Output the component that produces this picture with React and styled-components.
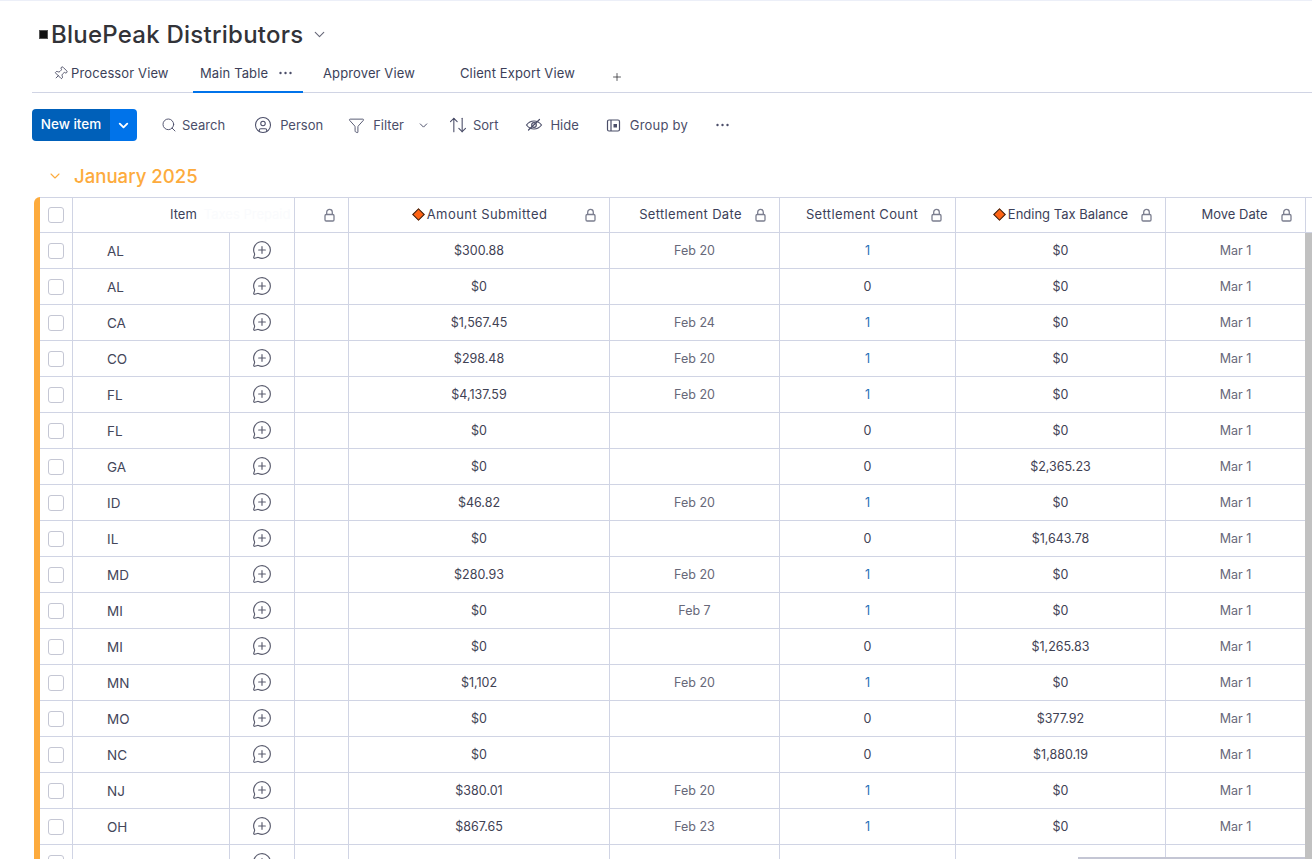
import React from "react";
import styled, { createGlobalStyle } from "styled-components";
import {
  ArrowUpDown,
  ChevronDown,
  CircleUser,
  Funnel,
  MessageCirclePlus,
  Pin,
  Plus,
  Search,
} from "lucide-react";

const LINE = "#d0d4e4";
const ORANGE = "#fdab3d";

const GlobalStyle = createGlobalStyle`
  html, body {
    margin: 0;
    height: 100%;
    overflow: hidden;
    background: #fff;
    font-family: Inter, "Liberation Sans", sans-serif;
    color: #323338;
  }
`;

const Page = styled.div`
  position: relative;
  height: 859px;
  overflow: hidden;
  border-top: 1px solid #eceff8;
  box-sizing: border-box;
`;

const TitleRow = styled.div`
  display: flex;
  align-items: center;
  height: 30px;
  margin: 18px 0 0 39px;
`;

const TitleMark = styled.span`
  width: 7px;
  height: 7px;
  margin-right: 3px;
  background: #111;
  border: 1px solid #555;
`;

const Title = styled.h1`
  margin: 0 8px 0 0;
  font-size: 24px;
  font-weight: 500;
  letter-spacing: 0.24px;
  color: #323338;
`;

const Tabs = styled.nav`
  display: flex;
  align-items: stretch;
  height: 43px;
  margin: 0 0 0 32px;
  border-bottom: 1px solid ${LINE};
`;

const Tab = styled.div`
  display: flex;
  align-items: center;
  gap: 3px;
  box-sizing: border-box;
  width: ${(p) => p.$width}px;
  height: 44px;
  padding: 6px 0 0 ${(p) => p.$pad}px;
  font-size: 13px;
  letter-spacing: 0.12px;
  color: #3c3f59;
  border-bottom: 2px solid ${(p) => (p.$active ? "#0073ea" : "transparent")};
`;

const TabDots = styled.span`
  display: flex;
  margin-left: 8px;
`;

const AddTab = styled.div`
  display: flex;
  align-items: center;
  padding: 12px 0 0 14px;
`;

const PinIcon = styled(Pin)`
  transform: rotate(45deg);
`;

const Toolbar = styled.div`
  display: flex;
  align-items: center;
  height: 32px;
  margin: 16px 0 0 32px;
`;

const NewItem = styled.div`
  display: flex;
  width: 105px;
  height: 32px;
  border-radius: 4px;
  overflow: hidden;
  color: #fff;
  font-size: 13.5px;
  font-weight: 500;
  margin-right: 24px;
`;

const NewItemLabel = styled.div`
  display: flex;
  align-items: center;
  justify-content: center;
  width: 78px;
  padding-bottom: 2px;
  box-sizing: border-box;
  background: #0060b9;
`;

const NewItemArrow = styled.div`
  display: flex;
  align-items: center;
  justify-content: center;
  flex: 1;
  background: #0073ea;
`;

const Tool = styled.div`
  display: flex;
  align-items: center;
  gap: ${(p) => p.$gap || 8}px;
  margin-right: ${(p) => p.$after}px;
  font-size: 13px;
  letter-spacing: ${(p) => p.$track || 0}px;
  color: #4b4e69;
  svg {
    flex: none;
  }
`;

const GroupHeader = styled.div`
  display: flex;
  align-items: center;
  gap: 11px;
  height: 28px;
  margin: 21px 0 7px 47px;
  color: ${ORANGE};
  font-size: 18.6px;
  font-weight: 500;
`;

const Table = styled.div`
  margin-left: 34px;
  border-left: 6px solid ${ORANGE};
  border-top-left-radius: 6px;
`;

const Row = styled.div`
  display: grid;
  grid-template-columns: 33px 157px 65px 54px 261px 170px 176px 210px 140px;
  height: 36px;
  box-sizing: border-box;
  border-bottom: 1px solid ${LINE};
`;

const HeadRow = styled.div`
  display: grid;
  grid-template-columns: 33px 222px 54px 261px 170px 176px 210px 140px;
  height: 36px;
  box-sizing: border-box;
  border-top: 1px solid ${LINE};
  border-bottom: 1px solid ${LINE};
  width: 1272px;
`;

const Cell = styled.div`
  display: flex;
  align-items: center;
  justify-content: center;
  box-sizing: border-box;
  min-width: 0;
  border-right: 1px solid ${LINE};
  font-size: 12.5px;
  color: ${(p) => p.$color || "#3f4254"};
`;

const ItemCell = styled(Cell)`
  justify-content: flex-start;
  padding-left: 34px;
  font-size: 13.5px;
  color: #44465a;
`;

const HeadCell = styled(Cell)`
  position: relative;
  font-size: 13px;
  color: #3c3f59;
  padding: 0 ${(p) => p.$shift || 0}px 2px ${(p) => p.$nudge || 0}px;
  letter-spacing: ${(p) => p.$track || 0}px;
  white-space: nowrap;
`;

const HeadItem = styled(HeadCell)`
  justify-content: flex-start;
  padding-left: 97px;
  gap: 7px;
`;

const GhostLabel = styled.span`
  color: #fafbfd;
  font-size: 13px;
`;

const LockWrap = styled.span`
  position: absolute;
  right: 13px;
  top: 10px;
  display: flex;
`;

const Diamond = styled.span`
  width: 7px;
  height: 7px;
  margin-right: 4px;
  background: #ff6414;
  border: 1px solid #33241c;
  transform: rotate(45deg);
`;

const Box = styled.span`
  width: 14px;
  height: 14px;
  border: 1px solid #c5c7d4;
  border-radius: 3px;
`;

const CommentIcon = styled(MessageCirclePlus)`
  margin: 0 0 2px 0;
  color: #5a5c6e;
`;

const ScrollY = styled.div`
  position: absolute;
  top: 232px;
  right: 0;
  bottom: 0;
  width: 7px;
  background: #c1c1c1;
`;

const ScrollX = styled.div`
  position: absolute;
  left: 1078px;
  right: 7px;
  bottom: 0;
  height: 2px;
  background: #c4c6d4;
`;

const TopEdge = styled.div`
  position: absolute;
  top: 196px;
  left: 1305px;
  right: 0;
  height: 1px;
  background: ${LINE};
`;

const HideIcon = () => (
  <svg width="18" height="18" viewBox="0 0 18 18" fill="none" stroke="#4b4e69" strokeWidth="1.2" strokeLinecap="round">
    <path d="M1.5 9C3.5 6.300 6 5 9 5s5.500 1.300 7.500 4c-2 2.700-4.500 4-7.500 4s-5.500-1.300-7.500-4Z" />
    <circle cx="9" cy="9" r="2.300" />
    <path d="M14.500 3.500 3.500 14" />
  </svg>
);

const GroupIcon = () => (
  <svg width="15" height="15" viewBox="0 0 15 15" fill="none" stroke="#4b4e69" strokeWidth="1.200">
    <rect x="1.500" y="2" width="12" height="11" rx="1.500" />
    <path d="M5 2v11" />
    <rect x="7.500" y="6" width="3.500" height="3.500" fill="#4b4e69" stroke="none" />
  </svg>
);

const DotsIcon = ({ width = 13 }) => (
  <svg width={width} height="4" viewBox="0 0 13 4" fill="#4b4e69">
    <circle cx="1.500" cy="2" r="1.200" />
    <circle cx="6.500" cy="2" r="1.200" />
    <circle cx="11.500" cy="2" r="1.200" />
  </svg>
);

const LockIcon = () => (
  <LockWrap>
    <svg width="11" height="14" viewBox="0 0 11 14" fill="none" stroke="#7b7e8f" strokeWidth="1.300">
      <path d="M2.700 6.500V4.200a2.800 2.800 0 0 1 5.600 0v2.300" />
      <rect x="1" y="6.500" width="9" height="6.500" rx="1.200" />
    </svg>
  </LockWrap>
);

const rows = [
  ["AL", "$300.88", "Feb 20", 1, "$0"],
  ["AL", "$0", "", 0, "$0"],
  ["CA", "$1,567.45", "Feb 24", 1, "$0"],
  ["CO", "$298.48", "Feb 20", 1, "$0"],
  ["FL", "$4,137.59", "Feb 20", 1, "$0"],
  ["FL", "$0", "", 0, "$0"],
  ["GA", "$0", "", 0, "$2,365.23"],
  ["ID", "$46.82", "Feb 20", 1, "$0"],
  ["IL", "$0", "", 0, "$1,643.78"],
  ["MD", "$280.93", "Feb 20", 1, "$0"],
  ["MI", "$0", "Feb 7", 1, "$0"],
  ["MI", "$0", "", 0, "$1,265.83"],
  ["MN", "$1,102", "Feb 20", 1, "$0"],
  ["MO", "$0", "", 0, "$377.92"],
  ["NC", "$0", "", 0, "$1,880.19"],
  ["NJ", "$380.01", "Feb 20", 1, "$0"],
  ["OH", "$867.65", "Feb 23", 1, "$0"],
];

export default function App() {
  return (
    <Page>
      <GlobalStyle />
      <TitleRow>
        <TitleMark />
        <Title>BluePeak Distributors</Title>
        <ChevronDown size={17} color="#676879" strokeWidth={1.6} />
      </TitleRow>
      <Tabs>
        <Tab $width={161} $pad={21}>
          <PinIcon size={15} strokeWidth={1.3} />
          Processor View
        </Tab>
        <Tab $width={110} $pad={7} $active>
          Main Table
          <TabDots><DotsIcon /></TabDots>
        </Tab>
        <Tab $width={137} $pad={20}>Approver View</Tab>
        <Tab $width={157} $pad={20}>Client Export View</Tab>
        <AddTab>
          <Plus size={12} strokeWidth={1.6} />
        </AddTab>
      </Tabs>
      <Toolbar>
        <NewItem>
          <NewItemLabel>New item</NewItemLabel>
          <NewItemArrow>
            <ChevronDown size={15} strokeWidth={3} />
          </NewItemArrow>
        </NewItem>
        <Tool $after={29} $gap={5}>
          <Search size={16} strokeWidth={1.4} />
          Search
        </Tool>
        <Tool $after={25}>
          <CircleUser size={18} strokeWidth={1.4} />
          Person
        </Tool>
        <Tool $after={13}>
          <Funnel size={17} strokeWidth={1.3} />
          Filter
        </Tool>
        <Tool $after={18}>
          <ChevronDown size={13} strokeWidth={1.8} />
        </Tool>
        <Tool $after={27} $gap={5}>
          <ArrowUpDown size={20} strokeWidth={1.3} />
          Sort
        </Tool>
        <Tool $after={27} $gap={7}>
          <HideIcon />
          Hide
        </Tool>
        <Tool $after={27} $gap={9} $track={0.2}>
          <GroupIcon />
          Group by
        </Tool>
        <Tool $after={0}>
          <DotsIcon width={15} />
        </Tool>
      </Toolbar>
      <GroupHeader>
        <ChevronDown size={16} strokeWidth={1.6} />
        January 2025
      </GroupHeader>
      <Table>
        <HeadRow>
          <Cell><Box /></Cell>
          <HeadItem>
            Item
            <GhostLabel>Taxes Prepaid</GhostLabel>
          </HeadItem>
          <HeadCell><LockIcon /></HeadCell>
          <HeadCell $track={0.44} $nudge={3}>
            <Diamond />
            Amount Submitted
            <LockIcon />
          </HeadCell>
          <HeadCell $shift={8} $track={0.33}>
            Settlement Date
            <LockIcon />
          </HeadCell>
          <HeadCell $shift={11} $track={0.37}>
            Settlement Count
            <LockIcon />
          </HeadCell>
          <HeadCell $nudge={2}>
            <Diamond />
            Ending Tax Balance
            <LockIcon />
          </HeadCell>
          <HeadCell $shift={2}>
            Move Date
            <LockIcon />
          </HeadCell>
        </HeadRow>
        {rows.map(([item, amount, settled, count, balance], i) => (
          <Row key={i}>
            <Cell><Box /></Cell>
            <ItemCell>{item}</ItemCell>
            <Cell><CommentIcon size={20} strokeWidth={1.4} /></Cell>
            <Cell />
            <Cell>{amount}</Cell>
            <Cell $color="#676879">{settled}</Cell>
            <Cell $color={count ? "#1f6fb8" : "#3f4254"}>{count}</Cell>
            <Cell>{balance}</Cell>
            <Cell $color="#676879">Mar 1</Cell>
          </Row>
        ))}
        <Row>
          <Cell><Box /></Cell>
          <ItemCell />
          <Cell><CommentIcon size={20} strokeWidth={1.4} /></Cell>
          <Cell />
          <Cell />
          <Cell />
          <Cell />
          <Cell />
          <Cell />
        </Row>
      </Table>
      <TopEdge />
      <ScrollY />
      <ScrollX />
    </Page>
  );
}
